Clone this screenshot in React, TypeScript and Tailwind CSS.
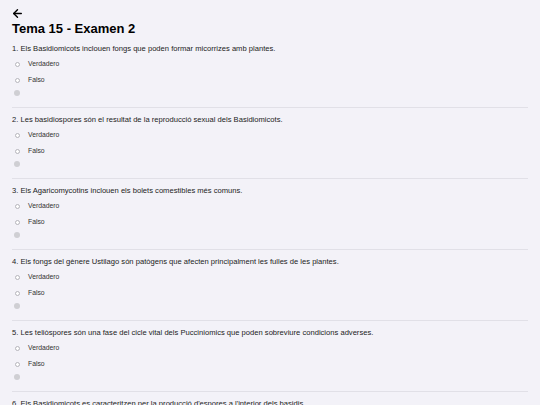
import React from 'react';
import { ArrowLeft } from 'lucide-react';

const questions = [
  '1. Els Basidiomicots inclouen fongs que poden formar micorrizes amb plantes.',
  '2. Les basidiospores són el resultat de la reproducció sexual dels Basidiomicots.',
  '3. Els Agaricomycotins inclouen els bolets comestibles més comuns.',
  '4. Els fongs del gènere Ustilago són patògens que afecten principalment les fulles de les plantes.',
  '5. Les teliòspores són una fase del cicle vital dels Pucciniomics que poden sobreviure condicions adverses.',
  '6. Els Basidiomicots es caracteritzen per la producció d\'espores a l\'interior dels basidis.',
];

const Option: React.FC<{ label: string; className?: string }> = ({ label, className }) => (
  <div className={`flex items-center h-[10px] pl-[3px] ${className ?? ''}`}>
    <span className="w-[5px] h-[5px] rounded-full border border-[#b5b5bb] bg-white" />
    <span className="ml-[8px] text-[6.8px] leading-[10px] text-[#333]">{label}</span>
  </div>
);

export default function App() {
  return (
    <div
      className="h-screen overflow-hidden bg-[#f3f2f8] px-[12px] text-[#1a1a1a]"
      style={{ fontFamily: '"Liberation Sans", Arial, sans-serif' }}
    >
      <div className="pt-[8px]">
        <div className="h-[11px] flex items-center">
          <ArrowLeft size={13} strokeWidth={2.6} className="-ml-[1px] text-black" />
        </div>
        <h1 className="mt-[2px] text-[13px] leading-[16px] font-bold text-black">Tema 15 - Examen 2</h1>
      </div>

      {questions.map((q, i) => (
        <div key={i} className="pt-[7px] pb-[11px] border-b border-[#e1e0e7]">
          <p className="h-[10px] text-[7.6px] leading-[10px] text-[#222] whitespace-nowrap">{q}</p>
          <Option label="Verdadero" className="mt-[5px]" />
          <Option label="Falso" className="mt-[6px]" />
          <div className="mt-[5px] pl-[2px] h-[6px]">
            <div className="w-[6px] h-[6px] rounded-full bg-[#cfcfd3]" />
          </div>
        </div>
      ))}
    </div>
  );
}
